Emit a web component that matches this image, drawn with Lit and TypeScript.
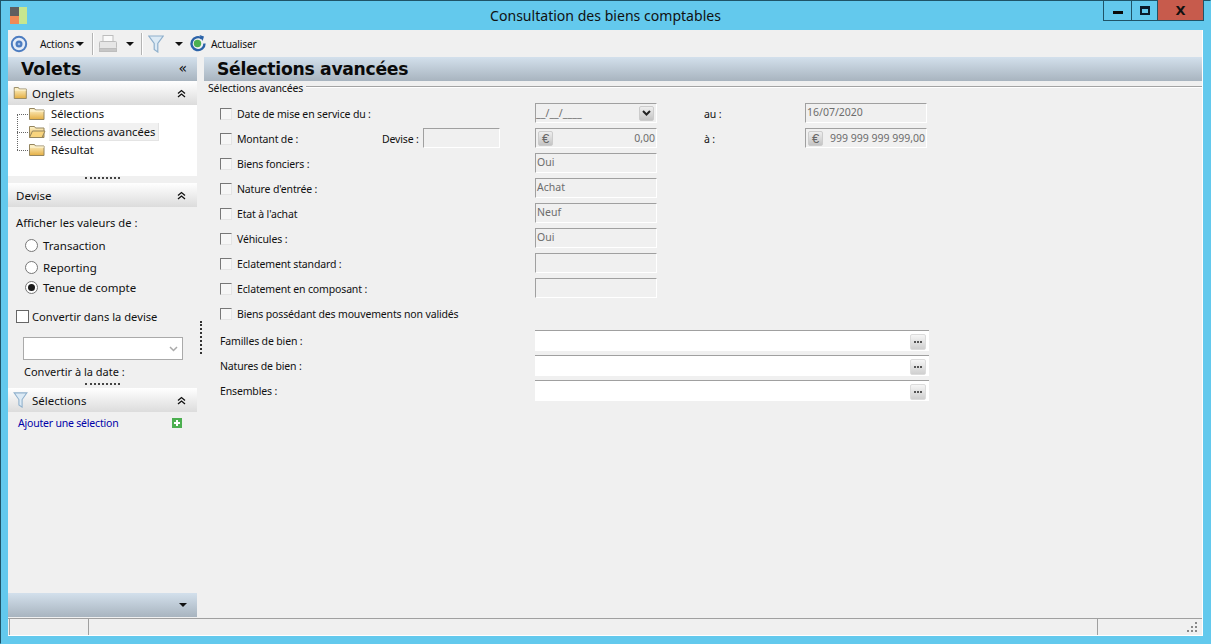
import { LitElement, html, css, svg } from "lit";
import { customElement } from "lit/decorators.js";

const folder = (open = false, w = 18, h = 14) => html`<svg class="folder" width=${w} height=${h} viewBox="0 0 18 14" preserveAspectRatio="none">
  <defs><linearGradient id="fg" x1="0" y1="0" x2="0" y2="1"><stop offset="0" stop-color="#fff6d0"/><stop offset="1" stop-color="#e4ae42"/></linearGradient></defs>
  <path d="M1.500 1.500h5l1 1.500h8.500v9.500h-14.500z" fill="url(#fg)" stroke="#94855f"/>
  ${open ? svg`<path d="M1.500 12.500l3-6.500h12.500l-3 6.500z" fill="#f8d47e" stroke="#94855f"/>` : svg`<path d="M2 4h14" stroke="#fff8dc"/>`}
</svg>`;

const funnel = (w: number, h: number) => html`<svg width=${w} height=${h} viewBox="0 0 16 18">
  <path d="M.8 1h14.400l-5.400 7.500v8.500l-3.600-2.500v-6z" fill="#dceaf5" stroke="#8fb0cc" stroke-width="1.200"/>
</svg>`;

const chev = html`<svg class="chev" width="9" height="9" viewBox="0 0 9 9"><path d="M1 4.500l3.500-3 3.500 3M1 8l3.500-3 3.500 3" fill="none" stroke="#111" stroke-width="1.300"/></svg>`;

const caret = (cls = "") => html`<span class="caret ${cls}"></span>`;

const euro = html`<span class="euro">€</span>`;

@customElement("app-root")
export class AppRoot extends LitElement {
  static styles = css`
    :host { display: block; width: 1211px; height: 644px; box-sizing: border-box; font: 10.500px "Noto Sans", sans-serif; letter-spacing: -0.150px; color: #111; }
    * { box-sizing: border-box; }
    .win { width: 1211px; height: 644px; display: flex; flex-direction: column; background: #63c9ed; border: 1px solid #1f5468; border-bottom-color: #63c9ed; border-right-color: #63c9ed; }
    .title { height: 29px; display: grid; grid-template-columns: 1fr auto 1fr; padding: 0 6px 0 6px; flex: none; }
    .logo { display: grid; grid-template-columns: 9px 8px; grid-template-rows: 9px 8px; margin: 6px 0 0 3px; width: 17px; height: 17px; }
    .logo i:nth-child(1) { background: #5f5f5f; }
    .logo i:nth-child(2) { background: #c6e68e; grid-row: span 2; }
    .logo i:nth-child(3) { background: #ef8a55; }
    .caption { font-size: 14.070px; letter-spacing: 0; line-height: 30px; color: #111; }
    .btns { justify-self: end; display: flex; height: 21px; margin-top: -1px; border: 1px solid #1f5468; border-top: 0; }
    .btns div { display: flex; align-items: center; justify-content: center; }
    .min { width: 28px; border-right: 1px solid #1f5468; }
    .min b { width: 10px; height: 3px; background: #0a0a0a; margin-top: 4px; }
    .max { width: 25px; }
    .max b { width: 10px; height: 9px; border: 2px solid #0a1a2a; border-top-width: 3px; }
    .close { width: 46px; background: #c75b4c; border-left: 1px solid #1f5468; }
    .close span { font: bold 13px "DejaVu Sans", sans-serif; color: #111; }
    .inner { flex: 1; margin: 0 7px 7px 7px; display: flex; flex-direction: column; background: #f0f0f0; min-height: 0; border-right: 1px solid #fff; }
    .toolbar { height: 27px; flex: none; display: flex; align-items: center; padding-left: 2px; }
    .toolbar .t { white-space: nowrap; font-size: 10.200px; }
    .actions { margin-left: 12px; }
    .c1 { margin-left: 2px; }
    .s1 { margin-left: 8px; }
    .printer { margin-left: 4px; }
    .c2 { margin-left: 8px; }
    .s2 { margin-left: 7px; }
    .fun { margin-left: 5px; display: flex; }
    .c3 { margin-left: 11px; }
    .refresh { margin-left: 6px; }
    .act { margin-left: 5px; }
    .sep { width: 1px; height: 22px; background: #b4b4b4; border-right: 1px solid #fff; box-sizing: content-box; }
    .caret { width: 0; height: 0; border: 4px solid transparent; border-top: 4px solid #111; border-bottom: 0; display: inline-block; }
    .main { flex: 1; display: flex; min-height: 0; }
    .side { width: 189px; flex: none; display: flex; flex-direction: column; }
    .volets, .phead { height: 24px; flex: none; background: linear-gradient(#d3e0ec, #a8b4bf); display: flex; align-items: center; justify-content: space-between; font: bold 17.200px "DejaVu Sans", sans-serif; letter-spacing: 0; color: #0a0a0a; }
    .volets { padding: 0 10px 0 13px; }
    .dbl { font: 14px "DejaVu Sans", sans-serif; font-weight: normal; margin-top: -3px; }
    .sh { height: 24px; flex: none; background: linear-gradient(#ffffff, #dcdcdc); display: flex; align-items: center; padding: 0 11px 0 5px; font-size: 11.500px; letter-spacing: 0; gap: 4px; }
    .sh span { flex: 1; }
    .sh.plain { padding-left: 8px; }
    .tree { height: 71px; background: #fff; flex: none; padding: 0 0 0 9px; position: relative; }
    .node { height: 18px; display: flex; align-items: center; font-size: 11.200px; letter-spacing: 0; }
    .node .link { width: 11px; height: 1px; border-top: 1px dotted #666; }
    .node .folder { margin: 0 3px 0 0; }
    .node .lbl { padding: 0 3px 0 2px; height: 18px; line-height: 17px; }
    .node.sel .lbl { background: #f1f1f1; border: 1px solid #e4e4e4; border-width: 0 1px 1px 0; }
    .vline { position: absolute; left: 9px; top: 9px; width: 1px; height: 36px; border-left: 1px dotted #666; }
    .grip { height: 7px; flex: none; display: flex; justify-content: center; padding-top: 1px; }
    .grip.low { padding-top: 2px; }
    .grip i { width: 35px; height: 2px; border-top: 2px dotted #444; }
    .dev { flex: none; height: 174px; display: flex; flex-direction: column; padding: 0 0 0 8px; font-size: 11.200px; letter-spacing: 0; }
    .aff { margin-top: 8px; height: 16px; line-height: 16px; }
    .radio { display: flex; align-items: center; gap: 5px; height: 20px; padding-left: 9px; font-size: 11.500px; }
    .r1 { margin-top: 4px; }
    .r2 { margin-top: 2px; }
    .radio i { width: 13px; height: 13px; border-radius: 50%; border: 1px solid #777; background: #fff; display: flex; align-items: center; justify-content: center; }
    .radio i b { width: 7px; height: 7px; border-radius: 50%; background: #1a1a1a; }
    .conv { display: flex; align-items: center; gap: 3px; margin-top: 10px; height: 18px; }
    .cb { width: 12px; height: 12px; flex: none; background: #f6f6f6; border: 1px solid; border-color: #777 #e4e4e4 #e4e4e4 #777; display: block; }
    .conv .cb { width: 13px; height: 13px; background: #fff; border-color: #666; }
    .combo { width: 160px; height: 23px; margin: 12px 0 0 7px; background: #fff; border: 1px solid #aaa; display: flex; justify-content: flex-end; align-items: center; padding-right: 4px; flex: none; }
    .cdate { margin: 4px 0 0 8px; height: 16px; line-height: 16px; font-size: 11px; }
    .add { display: flex; justify-content: space-between; align-items: center; padding: 0 15px 0 10px; color: #0000a8; font-size: 10.500px; letter-spacing: -0.200px; height: 22px; flex: none; }
    .spacer { flex: 1; }
    .bottom { height: 24px; flex: none; background: linear-gradient(#d3e0ec, #a8b4bf); display: flex; justify-content: flex-end; align-items: center; padding-right: 10px; }
    .split { width: 7px; flex: none; display: flex; align-items: center; justify-content: center; }
    .split i { width: 2px; height: 33px; border-left: 2px dotted #333; }
    .content { flex: 1; min-width: 0; display: flex; flex-direction: column; }
    .phead { padding-left: 13px; justify-content: flex-start; letter-spacing: -0.280px; }
    .legend { display: flex; align-items: center; height: 14px; line-height: 14px; padding-left: 4px; gap: 3px; }
    .legend hr { flex: 1; height: 2px; margin: 0; border: 0; border-top: 1px solid #a4a4a4; border-bottom: 1px solid #fff; position: relative; top: -1px; }
    .form { display: grid; grid-template-columns: 315px 122px 47px 101px 122px; grid-auto-rows: 20px; row-gap: 5px; padding: 8px 0 0 16px; }
    .cl { display: flex; align-items: center; gap: 5px; white-space: nowrap; padding-top: 1px; }
    .split2 { display: grid; grid-template-columns: 162px 41px 77px 35px; align-items: center; }
    .split2 .dl { white-space: nowrap; padding-top: 1px; }
    .f { height: 20px; border: 1px solid; border-color: #a0a0a0 #fff #fff #a0a0a0; color: #6d6d6d; display: flex; align-items: center; padding: 0 2px 3px 1px; letter-spacing: 0; }
    .f.num { justify-content: space-between; padding: 0 1px 0 2px; }
    .f.date { padding-left: 0; letter-spacing: 0.050px; }
    .full { grid-column: 1 / -1; display: grid; }
    .au { align-self: center; grid-column: 4; padding-top: 1px; }
    .row { grid-column: 3 / -1; }
    .euro { width: 15px; height: 15px; background: linear-gradient(#eee, #c4c4c4); border: 1px solid #ccc; border-radius: 2px; color: #666; font: 13px "Liberation Sans", sans-serif; display: flex; align-items: center; justify-content: center; }
    .drop { width: 15px; height: 15px; margin-right: 1px; background: linear-gradient(#eee, #c4c4c4); border: 1px solid #ccc; border-radius: 2px; display: flex; align-items: center; justify-content: center; }
    .lk { display: grid; grid-template-columns: 315px 394px; grid-auto-rows: 21px; row-gap: 4px; padding: 7px 0 0 16px; }
    .lk span { display: flex; align-items: center; }
    .w { background: #fff; border-top: 1px solid #a0a0a0; display: flex; justify-content: flex-end; align-items: center; padding-right: 3px; }
    .dots { width: 16px; height: 16px; margin-top: 2px; background: linear-gradient(#f6f6f6, #cfcfcf); border: 1px solid #dcdcdc; border-radius: 2px; display: flex; align-items: center; justify-content: center; gap: 1px; }
    .dots i { width: 2px; height: 2px; background: #555; }
    .status { height: 18px; flex: none; margin-top: 1px; display: grid; grid-template-columns: 80px 1fr 105px; border-top: 1px solid #a0a0a0; border-bottom: 1px solid #fff; position: relative; }
    .status div { border-left: 1px solid #a0a0a0; }
    .status div:first-child { margin-left: 1px; }
    .rz { position: absolute; right: 4px; bottom: 2px; }
  `;

  private field(text: string) {
    return html`<div class="f">${text}</div><span class="row"></span>`;
  }

  private checkRow(label: string) {
    return html`<label class="cl"><i class="cb"></i>${label}</label>`;
  }

  render() {
    return html`<div class="win">
      <div class="title">
        <div class="logo"><i></i><i></i><i></i></div>
        <div class="caption">Consultation des biens comptables</div>
        <div class="btns">
          <div class="min"><b></b></div>
          <div class="max"><b></b></div>
          <div class="close"><span>X</span></div>
        </div>
      </div>
      <div class="inner">
        <div class="toolbar">
          <svg width="18" height="18" viewBox="0 0 18 18"><circle cx="9" cy="9" r="7.200" fill="#e4ecf7" stroke="#4c7cc0" stroke-width="2"/><circle cx="9" cy="9" r="3.500" fill="#4c7cc0"/><circle cx="9" cy="9" r="1.300" fill="#9dbce6"/></svg>
          <span class="t actions">Actions</span>
          ${caret("c1")}
          <span class="sep s1"></span>
          <svg class="printer" width="20" height="20" viewBox="0 0 20 20"><rect x="5" y="1.500" width="10" height="6" fill="#fafafa" stroke="#bdbdbd"/><rect x="1.500" y="7.500" width="17" height="7" rx="1" fill="#e6e6e6" stroke="#bdbdbd"/><rect x="1.500" y="14.500" width="17" height="3" fill="#c6c6c6" stroke="#bdbdbd"/></svg>
          ${caret("c2")}
          <span class="sep s2"></span>
          <span class="fun">${funnel(16, 18)}</span>
          ${caret("c3")}
          <svg class="refresh" width="17" height="17" viewBox="0 0 17 17"><path d="M13 3.500a6.500 6.500 0 1 0 2.500 5" fill="none" stroke="#2a62a8" stroke-width="2.400"/><path d="M10.500 0l4.500 1.500-1.500 4.500z" fill="#2a62a8"/><circle cx="8.500" cy="8.500" r="3.700" fill="#4cb050"/></svg>
          <span class="t act">Actualiser</span>
        </div>
        <div class="main">
          <div class="side">
            <div class="volets">Volets<span class="dbl">«</span></div>
            <div class="sh">${folder(false, 15, 14)}<span>Onglets</span>${chev}</div>
            <div class="tree">
              <div class="vline"></div>
              <div class="node"><i class="link"></i>${folder()}<span class="lbl">Sélections</span></div>
              <div class="node sel"><i class="link"></i>${folder(true)}<span class="lbl">Sélections avancées</span></div>
              <div class="node"><i class="link"></i>${folder()}<span class="lbl">Résultat</span></div>
            </div>
            <div class="grip"><i></i></div>
            <div class="sh plain"><span>Devise</span>${chev}</div>
            <div class="dev">
              <div class="aff">Afficher les valeurs de :</div>
              <div class="radio r1"><i></i>Transaction</div>
              <div class="radio r2"><i></i>Reporting</div>
              <div class="radio"><i><b></b></i>Tenue de compte</div>
              <div class="conv"><i class="cb"></i>Convertir dans la devise</div>
              <div class="combo"><svg width="9" height="6" viewBox="0 0 9 6"><path d="M1 1l3.500 3.500 3.500-3.500" fill="none" stroke="#aaa" stroke-width="1.500"/></svg></div>
              <div class="cdate">Convertir à la date :</div>
            </div>
            <div class="grip low"><i></i></div>
            <div class="sh">${funnel(15, 16)}<span>Sélections</span>${chev}</div>
            <div class="add">Ajouter une sélection
              <svg width="10" height="10" viewBox="0 0 10 10"><rect width="10" height="10" fill="#4caf50"/><path d="M5 2v6M2 5h6" stroke="#fff" stroke-width="2"/></svg>
            </div>
            <div class="spacer"></div>
            <div class="bottom">${caret()}</div>
          </div>
          <div class="split"><i></i></div>
          <div class="content">
            <div class="phead">Sélections avancées</div>
            <div class="legend">Sélections avancées<hr /></div>
            <div class="form">
              ${this.checkRow("Date de mise en service du :")}
              <div class="f num date">__/__/____<span class="drop"><svg width="9" height="6" viewBox="0 0 9 6"><path d="M1 1l3.500 3.500 3.500-3.500" fill="none" stroke="#222" stroke-width="2"/></svg></span></div>
              <span class="au">au :</span>
              <div class="f">16/07/2020</div>

              <div class="split2">${this.checkRow("Montant de :")}<span class="dl">Devise :</span><div class="f"></div></div>
              <div class="f num">${euro}0,00</div>
              <span class="au">à :</span>
              <div class="f num">${euro}999 999 999 999,00</div>

              ${this.checkRow("Biens fonciers :")}${this.field("Oui")}
              ${this.checkRow("Nature d'entrée :")}${this.field("Achat")}
              ${this.checkRow("Etat à l'achat")}${this.field("Neuf")}
              ${this.checkRow("Véhicules :")}${this.field("Oui")}
              ${this.checkRow("Eclatement standard :")}${this.field("")}
              ${this.checkRow("Eclatement en composant :")}${this.field("")}
              <div class="full">${this.checkRow("Biens possédant des mouvements non validés")}</div>
            </div>
            <div class="lk">
              <span>Familles de bien :</span><div class="w"><div class="dots"><i></i><i></i><i></i></div></div>
              <span>Natures de bien :</span><div class="w"><div class="dots"><i></i><i></i><i></i></div></div>
              <span>Ensembles :</span><div class="w"><div class="dots"><i></i><i></i><i></i></div></div>
            </div>
          </div>
        </div>
        <div class="status">
          <div></div><div></div><div></div>
          <svg class="rz" width="11" height="11" viewBox="0 0 11 11" fill="#888"><rect x="8" y="0" width="2" height="2"/><rect x="4" y="4" width="2" height="2"/><rect x="8" y="4" width="2" height="2"/><rect x="0" y="8" width="2" height="2"/><rect x="4" y="8" width="2" height="2"/><rect x="8" y="8" width="2" height="2"/></svg>
        </div>
      </div>
    </div>`;
  }
}
